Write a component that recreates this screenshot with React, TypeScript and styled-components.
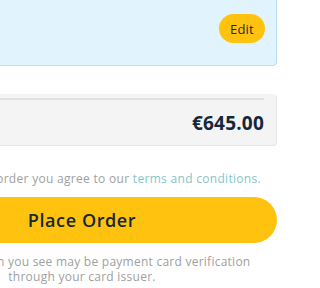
import React from "react";
import styled, { createGlobalStyle } from "styled-components";

const GlobalStyle = createGlobalStyle`
  html, body {
    margin: 0;
    padding: 0;
    background: #ffffff;
    overflow: hidden;
  }
  body {
    font-family: "Open Sans", "Liberation Sans", sans-serif;
  }
`;

const Page = styled.div`
  width: 390px;
  margin-left: -113px;
  margin-top: -9px;
  display: flex;
  flex-direction: column;
`;

const AddressCard = styled.div`
  height: 75px;
  box-sizing: border-box;
  background: #e1f4fd;
  border: 1px solid #b9dcef;
  border-radius: 4px;
  padding: 0 11px;
  display: flex;
  justify-content: flex-end;
  align-items: center;
`;

const EditButton = styled.button`
  width: 46px;
  height: 29px;
  border: none;
  border-radius: 15px;
  background: #ffc20e;
  color: #1d2b36;
  font-family: inherit;
  font-size: 13px;
  font-weight: 500;
  letter-spacing: 0.2px;
  cursor: pointer;
  padding: 0;
`;

const SummaryCard = styled.div`
  margin-top: 28px;
  box-sizing: border-box;
  background: #f4f4f4;
  border: 1px solid #e6e6e6;
  border-top-color: #f4f4f4;
  border-radius: 4px;
  padding: 3px 12px 0;
`;

const TotalRow = styled.div`
  height: 45px;
  border-top: 2px solid #e0e0e0;
  display: flex;
  justify-content: flex-end;
  align-items: center;
`;

const Total = styled.span`
  font-size: 19px;
  font-weight: 700;
  color: #13283a;
  letter-spacing: 0.2px;
`;

const Terms = styled.p`
  margin: 25px 0 0;
  font-size: 12px;
  line-height: 16px;
  letter-spacing: 0.3px;
  color: #a0a0a0;
  text-align: center;

  a {
    color: #86c5c9;
    text-decoration: none;
  }
`;

const PlaceOrderButton = styled.button`
  margin-top: 10px;
  height: 46px;
  border: none;
  border-radius: 23px;
  background: #ffc20e;
  color: #13283a;
  font-family: inherit;
  font-size: 18px;
  font-weight: 600;
  letter-spacing: 0.6px;
  cursor: pointer;
`;

const Notice = styled.p`
  margin: 11px 0 0;
  padding: 0 20px;
  font-size: 12px;
  line-height: 15px;
  letter-spacing: 0.25px;
  color: #a0a0a0;
  text-align: center;
`;

const App: React.FC = () => {
  return (
    <>
      <GlobalStyle />
      <Page>
        <AddressCard>
          <EditButton>Edit</EditButton>
        </AddressCard>
        <SummaryCard>
          <TotalRow>
            <Total>€645.00</Total>
          </TotalRow>
        </SummaryCard>
        <Terms>
          By placing your order you agree to our <a href="#">terms and conditions.</a>
        </Terms>
        <PlaceOrderButton>Place Order</PlaceOrderButton>
        <Notice>
          Any transaction you see may be payment card verification through your card issuer.
        </Notice>
      </Page>
    </>
  );
};

export default App;
